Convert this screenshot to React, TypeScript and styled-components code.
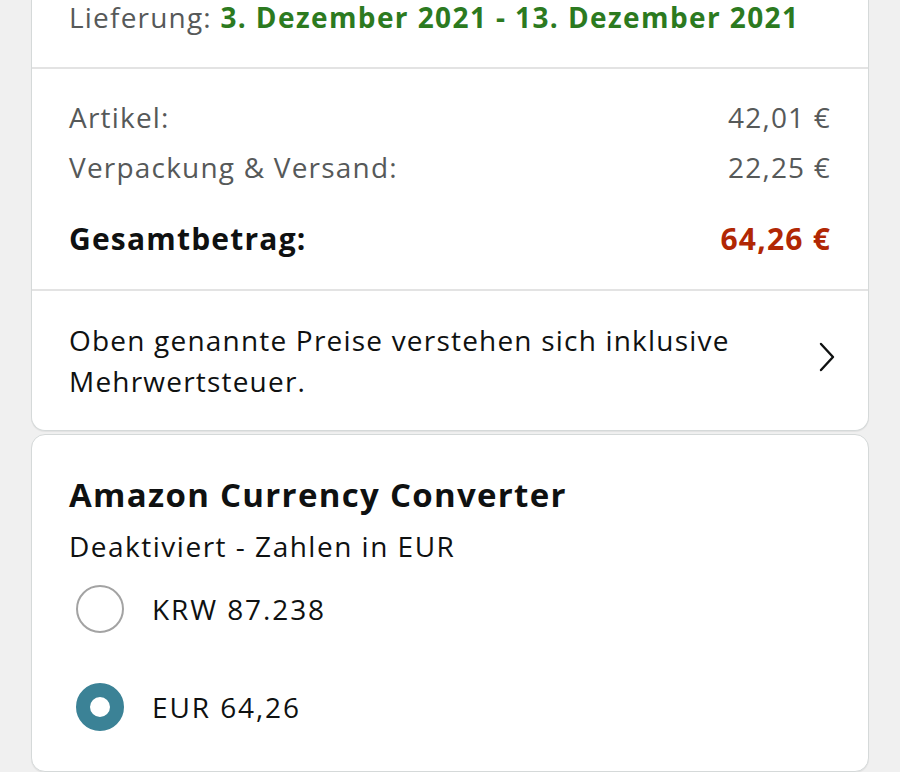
import React, { useState } from 'react';
import styled, { createGlobalStyle } from 'styled-components';

const GlobalStyle = createGlobalStyle`
  html, body {
    margin: 0;
    padding: 0;
    background: #f0f0f0;
    font-family: "Open Sans", "Noto Sans", sans-serif;
    color: #0f1111;
  }
`;

const Page = styled.div`
  display: flex;
  flex-direction: column;
  gap: 3px;
  padding: 0 31px;
  height: 772px;
  overflow: hidden;
`;

const Card = styled.div<{ $top?: boolean }>`
  background: #fff;
  border: 1px solid #d5d9d9;
  border-top: ${(p) => (p.$top ? 'none' : '1px solid #d5d9d9')};
  border-radius: ${(p) => (p.$top ? '0 0 14px 14px' : '14px')};
  box-shadow: 0 1px 1px rgba(0, 0, 0, 0.06);
  display: flex;
  flex-direction: column;
  flex-shrink: 0;
`;

const Section = styled.div<{ $pad: string }>`
  padding: ${(p) => p.$pad};
  letter-spacing: 1.2px;
  & + & {
    border-top: 2px solid #e3e3e3;
  }
`;

const Delivery = styled.div`
  font-size: 28px;
  line-height: 30px;
  color: #565959;
`;

const Green = styled.span`
  color: #2c7a1f;
  font-weight: 700;
  letter-spacing: 1.4px;
`;

const Row = styled.div<{ $total?: boolean }>`
  display: flex;
  justify-content: space-between;
  align-items: center;
  font-size: ${(p) => (p.$total ? '30px' : '28px')};
  line-height: 50px;
  font-weight: ${(p) => (p.$total ? 700 : 400)};
  color: ${(p) => (p.$total ? '#0f1111' : '#565959')};
  margin-top: ${(p) => (p.$total ? '22px' : '0')};
`;

const Price = styled.span<{ $total?: boolean }>`
  color: ${(p) => (p.$total ? '#b12704' : '#565959')};
`;

const TaxRow = styled.div`
  display: flex;
  align-items: center;
  justify-content: space-between;
  gap: 24px;
`;

const TaxText = styled.div`
  font-size: 28px;
  line-height: 41px;
  color: #0f1111;
`;

const ChevronBox = styled.span`
  display: flex;
  margin-bottom: 8px;
`;

const Title = styled.div`
  font-size: 33px;
  font-weight: 700;
  line-height: 44px;
  letter-spacing: 1.3px;
`;

const Subtitle = styled.div`
  font-size: 28px;
  line-height: 40px;
  margin-top: 9px;
  letter-spacing: 1.5px;
`;

const Options = styled.div`
  display: flex;
  flex-direction: column;
  gap: 50px;
  margin-top: 19px;
`;

const Option = styled.label`
  display: flex;
  align-items: center;
  gap: 28px;
  font-size: 28px;
  line-height: 48px;
  letter-spacing: 1.9px;
  cursor: pointer;
  padding-left: 7px;
`;

const Radio = styled.span<{ $checked: boolean }>`
  width: 48px;
  height: 48px;
  box-sizing: border-box;
  border-radius: 50%;
  border: ${(p) => (p.$checked ? '14px solid #3b8296' : '2px solid #a3a3a3')};
  background: #fff;
  flex-shrink: 0;
`;

const Chevron = () => (
  <svg width="22" height="32" viewBox="0 0 22 32" fill="none">
    <path d="M5 3 L17 16 L5 29" stroke="#0f1111" strokeWidth="2.4" strokeLinecap="round" strokeLinejoin="round" />
  </svg>
);

export default function App() {
  const [currency, setCurrency] = useState('EUR');
  const options = [
    { id: 'KRW', label: 'KRW 87.238' },
    { id: 'EUR', label: 'EUR 64,26' },
  ];
  return (
    <>
      <GlobalStyle />
      <Page>
        <Card $top>
          <Section $pad="2px 37px 35px">
            <Delivery>
              Lieferung: <Green>3. Dezember 2021 - 13. Dezember 2021</Green>
            </Delivery>
          </Section>
          <Section $pad="23px 37px 25px">
            <Row>
              <span>Artikel:</span>
              <Price>42,01 €</Price>
            </Row>
            <Row>
              <span>Verpackung &amp; Versand:</span>
              <Price>22,25 €</Price>
            </Row>
            <Row $total>
              <span>Gesamtbetrag:</span>
              <Price $total>64,26 €</Price>
            </Row>
          </Section>
          <Section $pad="29px 30px 28px 37px">
            <TaxRow>
              <TaxText>
                Oben genannte Preise verstehen sich inklusive
                <br />
                Mehrwertsteuer.
              </TaxText>
              <ChevronBox>
                <Chevron />
              </ChevronBox>
            </TaxRow>
          </Section>
        </Card>
        <Card>
          <Section $pad="38px 37px 40px">
            <Title>Amazon Currency Converter</Title>
            <Subtitle>Deaktiviert - Zahlen in EUR</Subtitle>
            <Options>
              {options.map((o) => (
                <Option key={o.id} onClick={() => setCurrency(o.id)}>
                  <Radio $checked={currency === o.id} />
                  {o.label}
                </Option>
              ))}
            </Options>
          </Section>
        </Card>
      </Page>
    </>
  );
}
